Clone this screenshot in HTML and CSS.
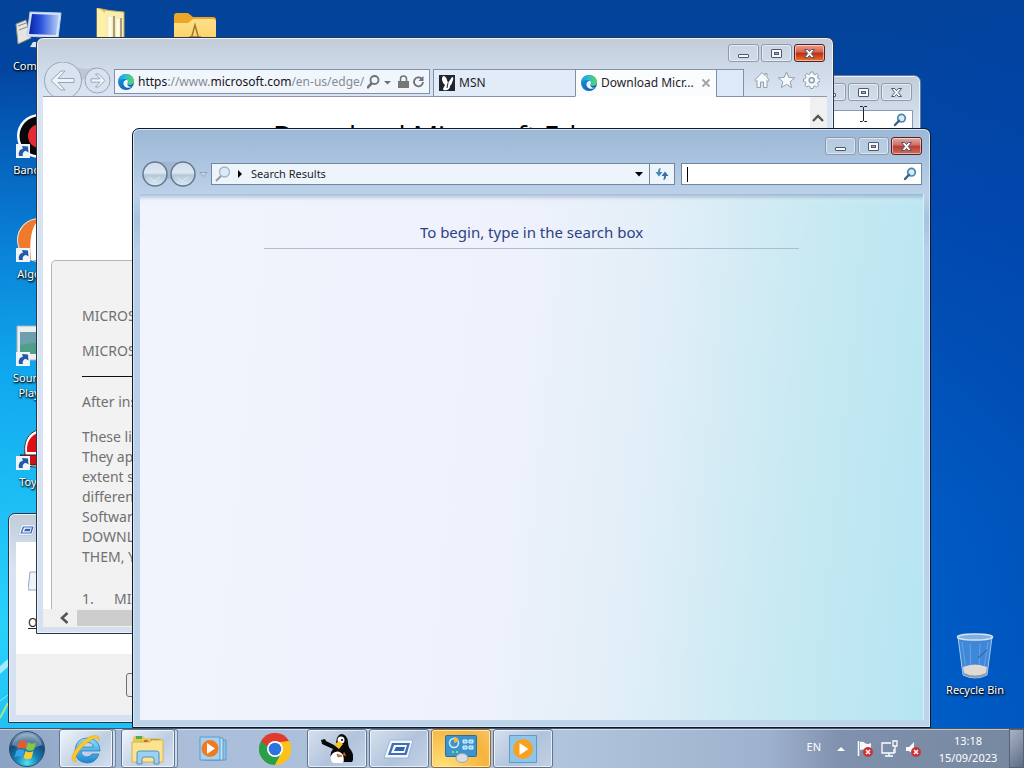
FILE: index.html
```html
<!DOCTYPE html>
<html lang="en">
<head>
<meta charset="utf-8">
<title>Desktop</title>
<link rel="stylesheet" href="styles.css">
</head>
<body>
<svg class="defs" aria-hidden="true">
  <defs>
    <linearGradient id="edgeBlue" x1="0" y1="0" x2="1" y2="1"><stop offset="0" stop-color="#1b9de2"/><stop offset="1" stop-color="#0c4fa3"/></linearGradient>
    <linearGradient id="edgeGreen" x1="0" y1="0" x2="1" y2="0"><stop offset="0" stop-color="#1c9be0"/><stop offset=".5" stop-color="#2fc0c8"/><stop offset="1" stop-color="#5fd65c"/></linearGradient>
    <linearGradient id="screen" x1="0" y1="0" x2="1" y2="0"><stop offset="0" stop-color="#0b22a8"/><stop offset=".4" stop-color="#2a55dc"/><stop offset="1" stop-color="#b8d0f6"/></linearGradient>
    <linearGradient id="folderY" x1="0" y1="0" x2="0" y2="1"><stop offset="0" stop-color="#ffe08a"/><stop offset="1" stop-color="#fbc64c"/></linearGradient>
    <linearGradient id="ieBlue" x1="0" y1="0" x2="0" y2="1"><stop offset="0" stop-color="#8ee0fb"/><stop offset="1" stop-color="#1c84d2"/></linearGradient>
    <radialGradient id="orb" cx=".5" cy=".9" r=".9"><stop offset="0" stop-color="#4fe3f5"/><stop offset=".35" stop-color="#1484b8"/><stop offset=".7" stop-color="#164a78"/><stop offset="1" stop-color="#8fa9c4"/></radialGradient>
    <linearGradient id="navBall" x1="0" y1="0" x2="0" y2="1"><stop offset="0" stop-color="#cfdcea"/><stop offset=".45" stop-color="#dce7f1"/><stop offset=".55" stop-color="#b4c8da"/><stop offset="1" stop-color="#dcebf5"/></linearGradient>
    <symbol id="edge" viewBox="0 0 16 16">
      <circle cx="8" cy="8" r="8" fill="url(#edgeBlue)"/>
      <path d="M0 7.500C.4 3 4 0 8 0c4.600 0 8 3.300 8 7 0 2.400-2 4-4.300 4-1.800 0-2.900-.8-2.200-1.700 1.200-1.700.1-4.200-2.600-4.400C4 4.700 1 5.800 0 7.500z" fill="url(#edgeGreen)"/>
      <path d="M9.500 9.200c.8-1.100.5-2.500-.5-3.400C6 6.200 4.600 9 6 11.500c1.300 2.300 5 3.200 8 1.200-2 .5-5.300-.6-4.500-3.500z" fill="#eef7fd"/>
    </symbol>
    <symbol id="g-min" viewBox="0 0 30 17"><rect x="9.500" y="9.500" width="10" height="3" rx=".5" fill="#f6f8fb" stroke="#50586c"/></symbol>
    <symbol id="g-max" viewBox="0 0 30 17"><rect x="9.500" y="4.500" width="10" height="8" rx=".5" fill="#f6f8fb" stroke="#50586c"/><rect x="12.500" y="7.500" width="4" height="2" fill="#9fb0c8" stroke="#50586c"/></symbol>
    <symbol id="g-close" viewBox="0 0 30 17"><path d="M9.500 4.500h3.200l1.800 2 1.800-2h3.200l-3.200 4 3.200 4h-3.200l-1.800-2-1.800 2h-3.200l3.200-4z" fill="#f8f9fc" stroke="#50586c"/></symbol>
    <symbol id="magnify" viewBox="0 0 14 14"><circle cx="8.500" cy="5.200" r="3.800" fill="#d4edf8" stroke="#4d84a8" stroke-width="1.700"/><path d="M6 7.700L2 12" stroke="#3a6488" stroke-width="2.400" stroke-linecap="round"/></symbol>
    <symbol id="shortcut" viewBox="0 0 14 14"><path d="M0 0h14v14H0z" fill="#eef5fb"/><path d="M3 12C2 8 4 5 7 4.800L6 2l6 .5.500 6L10 7C8 7 6 9 7 12z" fill="#245aa5"/></symbol>
    <symbol id="run" viewBox="0 0 30 20"><path d="M6 1h23l-5 18H0z" fill="#f1f6fd" stroke="#9eb4d6"/><path d="M8 4h18l-3.500 12H4z" fill="#416fb5"/><path d="M10 6h13l-2.500 8H7z" fill="#f6faff"/><path d="M12 8h9l-1.300 4H10z" fill="#2f63b4"/></symbol>
  </defs>
</svg>

<main class="desktop">
  <svg class="rays" viewBox="0 0 140 260" aria-hidden="true"><path d="M0 146C10 137 22 128 40 118L0 154z" fill="#d7f6ff" opacity=".7"/><path d="M0 198L8 183" stroke="#c5f36a" stroke-width="2" opacity=".8"/><path d="M0 181l9-7" stroke="#fff" opacity=".5"/></svg>

  <div class="shortcut computer">
    <svg width="48" height="44" viewBox="0 0 48 44"><path d="M1 14l10-4 5 18-13 6z" fill="#e6e6e0" stroke="#8a8a86"/><path d="M3 16l8-3M4 20l8-3" stroke="#888"/><path d="M15 2l31 1-3 25-31-2z" fill="#d9e6f8" stroke="#bcd0ee"/><path d="M17 4l27 1-3 20-27-1z" fill="url(#screen)"/><path d="M18 32h14l3 6-20-1z" fill="#dce3ee"/></svg>
    <span>Computer</span>
  </div>
  <div class="shortcut books">
    <svg width="48" height="44" viewBox="0 0 48 44"><path d="M12 0l14 3v38H12z" fill="#f3dc84" stroke="#c8a94c"/><path d="M19 2l20 2v38H19z" fill="#f7edb0" stroke="#c8a94c"/><path d="M25 9v32M33 11v30" stroke="#fffdf0" stroke-width="3"/><path d="M29 8v32M36 10v30" stroke="#a89c84" stroke-width="2"/><path d="M12 0l8 5v38l-8-3z" fill="#fff0a8"/></svg>
  </div>
  <div class="shortcut folder">
    <svg width="48" height="44" viewBox="0 0 48 44"><path d="M3 3q0-3 3-3h11l5 4h20q3 0 3 3v35H3z" fill="#eda526"/><path d="M3 10h14l5-4h20q3 0 3 3v33H3z" fill="url(#folderY)"/><path d="M19 30l5-18 5 18M18 24h12" fill="none" stroke="#9d7a2c" stroke-width="1.500"/></svg>
  </div>
  <div class="shortcut bandicam">
    <svg width="48" height="48" viewBox="0 0 48 48"><circle cx="24" cy="24" r="22" fill="#fff"/><circle cx="24" cy="24" r="19.500" fill="#080808"/><circle cx="25" cy="24" r="12" fill="#e62a35"/><use href="#shortcut" x="1" y="32" width="14" height="14"/></svg>
    <span>Bandicam</span>
  </div>
  <div class="shortcut algodoo">
    <svg width="48" height="48" viewBox="0 0 48 48"><circle cx="24" cy="24" r="22" fill="#f6ead8"/><circle cx="24" cy="24" r="21" fill="#f07a2c"/><path d="M16 44C14 26 16 10 24 4v40z" fill="#fff"/><use href="#shortcut" x="1" y="32" width="14" height="14"/></svg>
    <span>Algodoo</span>
  </div>
  <div class="shortcut sound">
    <svg width="48" height="48" viewBox="0 0 48 48"><path d="M2 6h44v34H2z" fill="#eceff0" stroke="#a9b3b8"/><path d="M5 12h40v22H5z" fill="#4f9e86"/><path d="M5 12h40v7L5 25z" fill="#6d9fae"/><use href="#shortcut" x="1" y="32" width="14" height="14"/></svg>
    <span>Sound HD<br>Player 2</span>
  </div>
  <div class="shortcut toy">
    <svg width="48" height="48" viewBox="0 0 48 48"><path d="M10 30C8 14 16 6 30 4l10 20-10 20-20-2z" fill="#fff" stroke="#333"/><path d="M12 28C11 15 18 9 30 7v21z" fill="#dd1015"/><path d="M5 31h30v10H16z" fill="#cc1417" stroke="#222"/><use href="#shortcut" x="1" y="32" width="14" height="14"/></svg>
    <span>Toy Box</span>
  </div>
  <div class="shortcut recycle">
    <svg width="48" height="48" viewBox="0 0 48 48"><path d="M7 5h34l-5 38q-12 6-24 0z" fill="#4f93de" fill-opacity=".8" stroke="#a9cbee"/><path d="M11 10l4 28M19 12l1 28M29 12l-1 27M37 10l-4 27" stroke="#8fbcf0" opacity=".5"/><path d="M12 35q12-5 24 0l-1 7q-11 5-22 0z" fill="#dfd9d4"/><path d="M13 41q11 5 22 0v2q-11 5-22 0z" fill="#8d9aab"/><path d="M36 18l-9 8" stroke="#2256a5"/><ellipse cx="24" cy="5" rx="17.500" ry="3" fill="#7fb1df" stroke="#d5e3ee" stroke-width="1.500"/></svg>
    <span>Recycle Bin</span>
  </div>

  <section class="window run-dialog" aria-label="Run">
    <header class="dialog-title"><svg width="18" height="12"><use href="#run"/></svg></header>
    <div class="dialog-body">
      <svg width="20" height="20" viewBox="0 0 20 20"><path d="M2 1h14l-4 18H0z" fill="#eef3fa" stroke="#96a8c4"/></svg>
      <div class="open-row">
        <label for="open"><u>O</u>pen:</label>
        <input id="open" class="open-field" type="text">
      </div>
    </div>
    <footer class="dialog-foot"><button type="button">OK</button></footer>
  </section>

  <section class="window back-window" aria-label="Explorer">
    <div class="controls">
      <button type="button" aria-label="Minimize"><svg><use href="#g-min"/></svg></button>
      <button type="button" aria-label="Maximize"><svg><use href="#g-max"/></svg></button>
      <button type="button" aria-label="Close"><svg><use href="#g-close"/></svg></button>
    </div>
    <div class="back-search"><input type="search" aria-label="Search explorer"><svg width="14" height="14"><use href="#magnify"/></svg></div>
    <div class="back-body"></div>
  </section>
  <svg class="pointer" width="7" height="16" viewBox="0 0 7 16" aria-hidden="true"><path d="M0 .5h2.500l1 1 1-1H7M0 15.500h2.500l1-1 1 1H7M3.500 1v14" fill="none" stroke="#222"/></svg>

  <section class="window browser" aria-label="Internet Explorer">
    <div class="controls">
      <button type="button" aria-label="Minimize"><svg><use href="#g-min"/></svg></button>
      <button type="button" aria-label="Maximize"><svg><use href="#g-max"/></svg></button>
      <button type="button" class="close" aria-label="Close"><svg><use href="#g-close"/></svg></button>
    </div>
    <div class="browser-bar">
      <svg class="ie-nav" width="68" height="34" viewBox="0 0 68 34"><path d="M28 3q8 4 17 4l8-2-14 14z" fill="#bcc8d6"/><g fill="#d8e3ef" stroke="#98a5b4"><circle cx="20" cy="18.500" r="18.500"/><circle cx="54.500" cy="18.500" r="12.500"/></g><g fill="#eef3fa" stroke="#98a5b4"><path d="M8 18.500l10-9.500h4l-7 7.500h16v4H15l7 7.500h-4z"/><path d="M62 18.500l-6.500-6.500h-3l4.500 4.800H48v3.400h9l-4.500 4.800h3z"/></g></svg>
      <div class="address">
        <svg width="16" height="16"><use href="#edge"/></svg>
        <span class="url"><b>https</b>://www.<b>microsoft.com</b>/en-us/edge/</span>
        <svg width="62" height="16" viewBox="2 0 62 16" fill="none" stroke="#6c717b"><circle cx="9.500" cy="6" r="4" stroke-width="1.800"/><path d="M7 9l-5 5" stroke-width="2.600"/><path d="M19 7h7l-3.500 3.500z" fill="#6c717b" stroke="none"/><path d="M33 7h11v7H33z" fill="#777" stroke="none"/><path d="M35.500 7V5q0-3 3-3t3 3v2" stroke-width="1.500"/><path d="M56.500 4.500A4.500 4.500 0 1 0 58 8" stroke-width="1.800"/><path d="M58.500 2v5h-5z" fill="#6c717b" stroke="none"/></svg>
      </div>
      <div class="tabs">
        <button type="button" class="tab"><svg width="16" height="16" viewBox="0 0 16 16"><path d="M0 0h16v16H0z" fill="#1f2630"/><path d="M4 1q3 0 4 4l1 3 4-6q2 0 1 3-1 4-3 6 0 3-3 4-4 1-4-1l2-4Q1 5 4 1z" fill="#fff"/><path d="M9 8l-1 5" stroke="#1f2630"/></svg><span>MSN</span></button>
        <button type="button" class="tab active"><svg width="16" height="16"><use href="#edge"/></svg><span>Download Micr...</span><svg class="tab-x" width="10" height="10" viewBox="0 0 10 10"><path d="M1.500 1.500l7 7m0-7l-7 7" stroke="#a2a2a2" stroke-width="1.800"/></svg></button>
        <button type="button" class="new-tab" aria-label="New tab"></button>
      </div>
      <svg class="tools" width="66" height="18" viewBox="0 0 66 18" fill="#f6f9fc" stroke="#929fae"><path d="M.8 9L8 1.500l3 3V2.500h2v4L15.200 9 14 10.500l-1-1V16.500H9.500V11h-3v5.500H3V9.500l-1 1z"/><path d="M32.500 1l2.300 5.400 5.900.5-4.500 3.800 1.400 5.800-5.100-3.100-5.100 3.100 1.400-5.800-4.500-3.800 5.900-.5z"/><path d="M56.500 1h2.500l.5 2 1.500.6L62.800 2.500l1.700 1.700-1.100 1.800.6 1.500 2 .5v2.500l-2 .5-.6 1.500 1.100 1.800-1.700 1.700-1.800-1.100-1.500.6-.5 2h-2.500l-.5-2-1.500-.6-1.800 1.100-1.700-1.700 1.100-1.800-.6-1.500-2-.5V8l2-.5.600-1.500L51 4.200l1.700-1.700 1.800 1.100 1.500-.6z"/><circle cx="57.700" cy="9.200" r="2.500" stroke-width="1.500"/></svg>
    </div>
    <div class="page">
      <div class="page-main">
        <h1>Download Microsoft Edge</h1>
        <article class="terms">
          <p>MICROSOFT SOFTWARE LICENSE TERMS</p>
          <p>MICROSOFT EDGE</p>
          <hr>
          <p>After installation</p>
          <p>These license terms<br>They apply to<br>extent such<br>different<br>Software<br>DOWNLOADING<br>THEM, YOU</p>
          <p class="item"><span>1.</span>MICROSOFT</p>
        </article>
        <div class="hscroll"><svg width="10" height="12" viewBox="0 0 10 12"><path d="M8.500 1L3 6l5.500 5" fill="none" stroke="#555" stroke-width="2.600"/></svg><i></i></div>
      </div>
      <div class="vscroll"><svg width="12" height="8" viewBox="0 0 12 8"><path d="M1 7l5-5 5 5" fill="none" stroke="#555" stroke-width="2.400"/></svg></div>
    </div>
  </section>

  <section class="window search" aria-label="Search Results">
    <div class="controls">
      <button type="button" aria-label="Minimize"><svg><use href="#g-min"/></svg></button>
      <button type="button" aria-label="Maximize"><svg><use href="#g-max"/></svg></button>
      <button type="button" class="close" aria-label="Close"><svg><use href="#g-close"/></svg></button>
    </div>
    <div class="search-bar">
      <svg width="68" height="28" viewBox="0 0 68 28"><path d="M8 3q20-3 42 0l-4 20q-18-8-34 0z" fill="#9fb8d0"/><g fill="url(#navBall)" stroke="#66788f" stroke-width="1.500"><circle cx="14" cy="14" r="12"/><circle cx="42" cy="14" r="12"/></g><path d="M8 17l5 4 6-4M36 17l5 4 6-4" fill="none" stroke="#eef5fa" opacity=".6"/><path d="M59 12.500h7l-3.500 4z" fill="#c9d9ea" stroke="#8ba4c3"/></svg>
      <div class="crumbs">
        <svg width="16" height="16" viewBox="0 0 16 16"><circle cx="9.500" cy="6" r="5" fill="#dcebf7" stroke="#a6b5c5" stroke-width="1.300"/><path d="M6 10l-5 5" stroke="#8f9aa5" stroke-width="2"/></svg>
        <svg width="6" height="8" viewBox="0 0 6 8"><path d="M1 0l4 4-4 4z"/></svg>
        <span>Search Results</span>
        <button type="button" class="drop" aria-label="Previous locations"><svg width="8" height="5" viewBox="0 0 8 5"><path d="M0 0h8L4 4.500z"/></svg></button>
        <button type="button" class="refresh" aria-label="Refresh"><svg width="14" height="14" viewBox="0 0 14 14"><path d="M6 1Q3 1 3 5H.5L4 9.500 7.500 5H5Q5 2 6 1z" fill="#3f87bd"/><path d="M8 13q3 0 3-4h2.500L10 4.500 6.500 9H9q0 3-1 4z" fill="#3a6ea6"/></svg></button>
      </div>
      <div class="search-field"><i></i><input type="search" aria-label="Search"><svg width="14" height="14"><use href="#magnify"/></svg></div>
    </div>
    <div class="search-body"><p>To begin, type in the search box</p></div>
  </section>
</main>

<nav class="taskbar" aria-label="Taskbar">
  <button type="button" class="start" aria-label="Start"><svg width="38" height="38" viewBox="0 0 38 38"><circle cx="19" cy="19" r="17.500" fill="url(#orb)" stroke="#234f77"/><path d="M4 15a15.500 15.500 0 0 1 30 0q-15 7-30 0z" fill="#fff" opacity=".3"/><path d="M11 12q4-3 8 0l-2 7q-4-2-8 0z" fill="#ec5a25"/><path d="M20 12.500q4 2.500 8 0l-2 7q-4 2.500-8 0z" fill="#8cc63f"/><path d="M8.500 20.500q4-2.500 8 0l-2 7q-4-2.500-8 0z" fill="#36a1e8"/><path d="M17.500 21q4 2.500 8 0l-2 7q-4 2.500-8 0z" fill="#fcca2e"/></svg></button>
  <button type="button" class="task open stack" aria-label="Internet Explorer"><svg width="32" height="32" viewBox="0 0 32 32"><path d="M30 18H11q1 6 6 6 3 0 5-3h7q-3 9-12 9Q5 29 5 17.500 6 5 17.500 5 30 6 30 18zM11.500 14h12q-1-4.500-6-4.500T11.500 14z" fill="url(#ieBlue)" stroke="#2178bb" stroke-width=".7"/><path d="M4 29Q-2 25 9 12 21 0 28 3q2 1 1 5-1-4-6-2-8 4-14 12-6 9-2 10z" fill="#fbc82c" stroke="#d99a18" stroke-width=".4"/></svg></button>
  <button type="button" class="task open stack" aria-label="Explorer"><svg width="34" height="32" viewBox="0 0 34 32"><path d="M2 5q0-2 2-2h8l2 2h16v24H2z" fill="#e7c65a"/><path d="M5 3h6v3H5z" fill="#4caf50"/><path d="M20 6h8v3h-8z" fill="#4596d6"/><path d="M1 9h18l2-2h11v22H1z" fill="#fbe391" stroke="#d9b447"/><path d="M13 7h4v2h-4z" fill="#d06a2e"/><path d="M6 31V20q0-2 3-2h16q3 0 3 2v11h-5v-5q0-2-2-2h-8q-2 0-2 2v5z" fill="#9bd1f3" stroke="#508fc4"/></svg></button>
  <button type="button" class="task" aria-label="Media Player"><svg width="28" height="26" viewBox="0 0 28 26"><path d="M7 4h20v20H7z" fill="#8cc2e8" stroke="#5b9aca"/><path d="M4 2h20v22H4z" fill="#c7e3f6" stroke="#5b9aca"/><path d="M1 1h20v23H1z" fill="#a9d0ee" stroke="#5b9aca"/><circle cx="11" cy="12.500" r="8.500" fill="#f07a22"/><path d="M8 7l8 5.500L8 18z" fill="#fff"/></svg></button>
  <button type="button" class="task" aria-label="Chrome"><svg width="32" height="32" viewBox="0 0 32 32"><path d="M16 16L2.100 8A16 16 0 0 1 29.900 8z" fill="#df3b2f"/><path d="M16 16L29.900 8A16 16 0 0 1 16 32z" fill="#fbc319"/><path d="M16 16v16A16 16 0 0 1 2.100 8z" fill="#2b9e48"/><path d="M16 8h13.900L22 20z" fill="#fbc319"/><path d="M2.100 8L9 20l7-4V8z" fill="#2b9e48"/><path d="M2.100 8h27.800L16 9.500l-6 5z" fill="#df3b2f"/><path d="M9.500 20L16 32l6.500-12z" fill="#2b9e48"/><path d="M16 32l6.500-12L29.900 8A16 16 0 0 1 16 32z" fill="#fbc319"/><circle cx="16" cy="16" r="8" fill="#fff"/><circle cx="16" cy="16" r="6.300" fill="#2b72e2"/></svg></button>
  <button type="button" class="task open" aria-label="Penguin"><svg width="32" height="30" viewBox="0 0 32 30"><path d="M0 6l4-1 1 2 10 5q0-11 5-12 6 0 7 8 0 5 3 8 4 7 1 12H12q-5-7 0-13L1 10z" fill="#090909"/><path d="M12 19q6-4 10 2 2 7-1 8h-9q-5-5 0-10z" fill="#fff"/><ellipse cx="20" cy="6" rx="3.500" ry="3.500" fill="#fff"/><circle cx="21" cy="6" r="1"/><path d="M13 11l5-4 4 3-4 5z" fill="#f7c325"/><path d="M16 20l5 2-4 1zM23 18l2 4-3-1z" fill="#e2912c" stroke="#7c3b16" stroke-width=".6"/></svg></button>
  <button type="button" class="task open" aria-label="Run"><svg width="30" height="20"><use href="#run"/></svg></button>
  <button type="button" class="task alert" aria-label="Control Panel"><svg width="32" height="28" viewBox="0 0 32 28"><rect x=".5" y=".5" width="31" height="21" rx="1" fill="#3b94ce" stroke="#2a6fa3"/><circle cx="9" cy="8" r="4.500" fill="none" stroke="#d7edfa" stroke-width="1.500"/><path d="M9 8V2a5.500 5.500 0 0 1 5 4z" fill="#f5b94a"/><path d="M18 5h4v3h-4zM24 5h4v3h-4zM18 11h4v3h-4zM24 11h4v3h-4z" fill="#7ec8e8" stroke="#e8f5fc"/><path d="M7 17h2M11 17h2" stroke="#8fdc6a" stroke-width="2"/><ellipse cx="17" cy="23" rx="6" ry="4.500" fill="#d9dde2" stroke="#9ba5b0"/></svg></button>
  <button type="button" class="task open" aria-label="Player"><svg width="28" height="28" viewBox="0 0 28 28"><path d="M.5.5h27v27H.5z" fill="#90c5ea" stroke="#5c9ccc"/><circle cx="14" cy="14" r="10" fill="#f9a11f"/><path d="M10.500 8l9 6-9 6z" fill="#fff"/></svg></button>
  <div class="tray">
    <span>EN</span>
    <svg width="8" height="4" viewBox="0 0 8 4"><path d="M4 0l4 4H0z" fill="#fff"/></svg>
    <svg width="64" height="18" viewBox="0 0 64 18"><path d="M1.500 1v15" stroke="#fff" stroke-width="1.500"/><path d="M3 2q3-1 5 1t6 0v7q-4 1-6 0t-5 0z" fill="#f8f8f8"/><circle cx="11" cy="12" r="5" fill="#cc3336"/><path d="M9 10l4 4m0-4l-4 4" stroke="#fff" stroke-width="1.500"/><g fill="none" stroke="#fff" stroke-width="1.300"><path d="M34 3h-9v10h12V9M28 16h8M32 13v3"/><path d="M36 1h4v5h-4zM38 6v7"/></g><path d="M49 7h3l5-5v13l-5-4h-3z" fill="#f8f8f8"/><circle cx="59" cy="12" r="5" fill="#cc3336"/><path d="M57 10l4 4m0-4l-4 4" stroke="#fff" stroke-width="1.500"/></svg>
    <time>13:18<br>15/09/2023</time>
    <button type="button" class="peek" aria-label="Show desktop"></button>
  </div>
</nav>
</body>
</html>
```

FILE: styles.css
```css
* { box-sizing: border-box; }
html, body { height: 100%; }
body {
  margin: 0;
  display: flex;
  flex-direction: column;
  overflow: hidden;
  font: 12px/16px "Noto Sans", sans-serif;
  color: #1e1e28;
  background: #0058c0;
}
button, input { font: inherit; color: inherit; margin: 0; padding: 0; border: 0; background: none; border-radius: 0; }
button { display: flex; align-items: center; justify-content: center; }
svg { flex: none; display: block; }
.defs { position: absolute; width: 0; height: 0; }

/* Desktop */
.desktop {
  position: relative;
  flex: 1;
  background:
    linear-gradient(90deg, transparent 85%, rgba(0, 66, 168, .35)),
    radial-gradient(ellipse 800px 560px at 4% 86%, #2bd4fb 0%, #10a8ee 45%, rgba(0, 110, 215, 0) 100%),
    linear-gradient(180deg, #044399 0%, #0148ae 28%, #005dc6 70%, #0062cc 100%);
}
.rays { position: absolute; left: 0; top: 520px; width: 140px; height: 260px; }
.shortcut {
  position: absolute;
  width: 74px;
  display: flex;
  flex-direction: column;
  align-items: center;
  gap: 2px;
  color: #fff;
  font-size: 11px;
  line-height: 15px;
  text-align: center;
  text-shadow: 0 1px 2px #000, 1px 1px 2px #000;
}
.computer { left: 2px; top: 10px; gap: 4px; }
.books { left: 72px; top: 8px; }
.folder { left: 158px; top: 13px; }
.bandicam { left: 2px; top: 112px; }
.algodoo { left: 2px; top: 216px; }
.sound { left: 2px; top: 320px; }
.toy { left: 2px; top: 424px; }
.recycle { left: 938px; top: 632px; }

/* Window frames */
.window {
  position: absolute;
  display: flex;
  flex-direction: column;
  border: 1px solid #2c3648;
  border-radius: 7px 7px 0 0;
  padding: 7px;
  background: linear-gradient(180deg, #c2ccd8 0, #ccd8e6 25px, #d8e4f2 55px, #d5e1f1 100%);
  box-shadow: inset 0 0 0 1px #eaf2fa;
}
.controls { display: flex; justify-content: flex-end; gap: 2px; padding-right: 1px; }
.controls button {
  width: 31px;
  height: 18px;
  border: 1px solid #8d99ad;
  border-radius: 3px;
  background: rgba(215, 225, 238, .4);
  box-shadow: inset 0 0 0 1px rgba(255, 255, 255, .5);
}
.controls svg { width: 30px; height: 17px; }
.controls .close {
  border-color: #5a1f22;
  background: linear-gradient(180deg, #ea9f8d 0, #d9604a 45%, #bd2b10 50%, #e87634 100%);
}

.run-dialog { left: 8px; top: 513px; width: 412px; height: 210px; }
.dialog-title { height: 21px; padding: 3px 2px; }
.dialog-body { flex: 1; display: flex; flex-direction: column; gap: 24px; padding: 29px 12px 0; background: #fff; }
.open-row { display: flex; gap: 12px; }
.open-field { width: 240px; border: 1px solid #999; }
.dialog-foot { height: 61px; display: flex; align-items: flex-start; padding: 19px 110px; background: #f0f0f0; }
.dialog-foot button { width: 76px; height: 24px; border: 1px solid #707070; border-radius: 3px; background: #ececec; }

.back-window { left: 240px; top: 75px; width: 681px; height: 500px; gap: 9px; border-color: #65799a; }
.back-search { display: flex; align-items: center; align-self: flex-end; width: 240px; height: 20px; padding-right: 5px; border: 1px solid #8b9ab0; background: #fff; }
.back-search input, .search-field input { flex: 1; min-width: 0; height: 18px; outline: 0; }
.back-body { flex: 1; background: #fff; }
.pointer { position: absolute; left: 860px; top: 106px; }

/* Browser */
.browser { left: 36px; top: 37px; width: 798px; height: 597px; padding: 6px; }
.browser .controls { padding-right: 2px; }
.browser-bar { display: flex; align-items: flex-start; height: 35px; border-bottom: 1px solid #8c97a8; }
.ie-nav { align-self: flex-end; }
.browser-bar .address, .browser-bar .tabs { margin-top: 7px; }
.address {
  display: flex;
  align-items: center;
  width: 316px;
  height: 25px;
  margin-left: 3px;
  padding-left: 3px;
  border: 1px solid #8390a6;
  background: #f1f6fc;
}
.url { flex: 1; margin-left: 4px; white-space: nowrap; color: #858b96; }
.url b { font-weight: 400; color: #15151c; }
.tabs { display: flex; height: 28px; margin-left: 3px; }
.tab { justify-content: flex-start; gap: 4px; width: 142px; padding: 0 5px; border: solid #8390a6; border-width: 1px 0 1px 1px; background: #e2ebf8; }
.tab.active { width: 141px; border-bottom-color: #fff; background: #fbfcfe; }
.tab span { flex: 1; text-align: left; white-space: nowrap; }
.new-tab { width: 28px; border: 1px solid #8390a6; background: #dce9f8; }
.tools { margin: 9px 7px 0 auto; }
.page { flex: 1; min-height: 0; display: flex; background: #fff; }
.page-main { flex: 1; min-width: 0; display: flex; flex-direction: column; }
.page h1 { margin: 19px 0 0 230px; height: 144px; font: 400 28px/38px "Open Sans", sans-serif; color: #000; white-space: nowrap; }
.terms {
  flex: 1;
  min-height: 0;
  margin: 0 30px 0 8px;
  padding: 45px 30px 0;
  border: 1px solid #b5b5b5;
  border-bottom: 0;
  border-radius: 5px 5px 0 0;
  background: #f2f2f2;
  color: #707070;
  font: 14px/20px "Noto Sans", sans-serif;
  white-space: nowrap;
}
.terms p { margin: 0 0 15px; }
.terms hr { height: 1px; margin: 0 0 15px; border: 0; background: #111; }
.terms .item { display: flex; margin: 22px 0 0; }
.item span { width: 32px; }
.hscroll { display: flex; align-items: center; height: 18px; padding-left: 16px; gap: 8px; background: #f0f0f0; }
.hscroll i { width: 600px; height: 16px; background: #cdcdcd; }
.vscroll { width: 17px; padding: 17px 2px; background: #f0f0f0; }

/* Search window */
.search {
  left: 132px;
  top: 128px;
  width: 799px;
  height: 600px;
  padding: 8px 6px 7px 7px;
  border-color: #10182a;
  background: linear-gradient(180deg, #9bb8d6 0, #aac3de 30px, #bdd2e9 66px, #a3c3e0 90px, #b7cfe7 120px, #bdd3ea 100%);
  box-shadow: inset 0 0 0 1px #d5e8f6;
}
.search .controls { padding-right: 2px; }
.search .close { background: linear-gradient(180deg, #e3a9a3 0, #cf6d62 45%, #b63f34 50%, #cf6a5c 100%); }
.search-bar { display: flex; align-items: center; height: 38px; padding-right: 2px; }
.search-bar > svg { margin-left: 1px; }
.crumbs { flex: 1; display: flex; align-items: center; gap: 6px; height: 22px; margin-left: 2px; padding-left: 3px; border: 1px solid #71869f; background: #eef4fb; }
.crumbs span { flex: 1; margin-left: 2px; white-space: nowrap; font-size: 11px; }
.drop { width: 8px; height: 20px; }
.refresh { width: 25px; height: 20px; border-left: 1px solid #71869f; }
.search-field { display: flex; align-items: center; width: 241px; height: 22px; margin-left: 6px; padding: 0 4px 0 5px; border: 1px solid #71869f; background: #fff; }
.search-field i { width: 1px; height: 15px; background: #000; }
.search-body {
  flex: 1;
  margin-top: 1px;
  padding: 27px 124px 0;
  border-right: 1px solid #d8f0f8;
  background:
    linear-gradient(180deg, rgba(130, 158, 192, .65) 0, rgba(220, 232, 244, .25) 6px, transparent 12px),
    linear-gradient(96deg, #f1f4fc 0%, #eff2fd 45%, #e3eff8 62%, #c7e9f2 82%, #b5e5f2 100%);
}
.search-body p { margin: 0; padding-bottom: 5px; border-bottom: 1px solid #b2bacd; color: #2c4284; font-size: 15px; line-height: 22px; text-align: center; }

/* Taskbar */
.taskbar {
  display: flex;
  align-items: stretch;
  height: 40px;
  padding-left: 7px;
  border-top: 1px solid #48566b;
  background: linear-gradient(90deg, #8ba2c2 0, #a9bdd8 14%, #b0c4de 55%, #9fb2cd 75%, #7f91ae 82%, #76879f 100%);
  box-shadow: inset 0 1px 0 rgba(255, 255, 255, .5);
}
.start { width: 40px; margin-right: 12px; }
.task { width: 60px; margin-right: 2px; border: 1px solid transparent; border-radius: 3px; }
.task.open { border-color: #60748f; background: linear-gradient(135deg, #d6e0ee, #b1c3dc 55%, #c2d2e6); box-shadow: inset 0 0 0 1px rgba(255, 255, 255, .65); }
.task.stack { width: 54px; margin-right: 8px; background: linear-gradient(135deg, #f0f5fb, #bdcde2 60%, #d5e1ef); box-shadow: inset 0 0 0 1px #eef4fb, 3px 0 0 -1px #cddaea, 3px 0 0 0 #71859f; }
.task.alert { border-color: #9c6a2c; background: radial-gradient(circle at 20% 100%, #ffe27a, #f6b33c 70%, #f8c568); box-shadow: inset 0 0 0 1px #fde9b4; }
.tray { flex: 1; display: flex; align-items: center; justify-content: flex-end; color: #fff; font-size: 11px; line-height: 17px; }
.tray span { margin: -4px 16px 0 0; }
.tray svg + svg { margin: 0 17px 0 12px; }
.tray time { width: 60px; margin-right: 11px; text-align: center; white-space: nowrap; }
.peek { align-self: stretch; width: 15px; border: 1px solid #55637a; background: linear-gradient(135deg, #a8b3c3, #5e6c84); }
```
